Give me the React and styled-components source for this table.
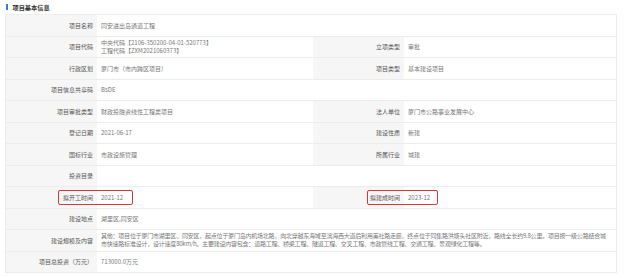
import React from "react";
import styled, { createGlobalStyle } from "styled-components";

const GlobalStyle = createGlobalStyle`
  html, body {
    margin: 0;
    padding: 0;
    background: #fff;
  }
  body {
    font-family: "Noto Sans CJK SC", "Noto Sans", sans-serif;
    color: #333;
  }
`;

const rows = [
  { full: true, label: "项目名称", value: "同安进出岛通道工程" },
  {
    label: "项目代码",
    value: ["中央代码【2106-350200-04-01-520773】", "工程代码【ZXM2021060373】"],
    label2: "立项类型",
    value2: "审批",
  },
  { label: "行政区划", value: "厦门市（市内跨区项目）", label2: "项目类型", value2: "基本建设项目" },
  { full: true, label: "项目信息共享码", value: "BsDE" },
  { label: "项目审批类型", value: "财政投融资线性工程类项目", label2: "法人单位", value2: "厦门市公路事业发展中心" },
  { label: "登记日期", value: "2021-06-17", label2: "建设性质", value2: "新建" },
  { label: "国标行业", value: "市政设施管理", label2: "所属行业", value2: "城建" },
  { full: true, label: "投资目录", value: "" },
  { label: "拟开工时间", value: "2021-12", label2: "拟建成时间", value2: "2023-12", marked: true },
  { full: true, label: "建设地点", value: "湖里区,同安区" },
  {
    full: true,
    tight: true,
    label: "建设规模及内容",
    value: [
      "其他：项目位于厦门市湖里区、同安区，起点位于厦门岛内机场北路，向北穿越东海域至滨海西大道后利用美社路走廊，终点位于同集路洪塘头社区附近，路线全长约9.8公里。项目按一级公路结合城",
      "市快速路标准设计，设计速度80km/h。主要建设内容包含：道路工程、桥梁工程、隧道工程、交叉工程、市政管线工程、交通工程、景观绿化工程等。",
    ],
  },
  { full: true, label: "项目总投资（万元）", value: "713000.0万元" },
];

const App = () => {
  return (
    <>
      <GlobalStyle />
      <Panel>
        <Header>项目基本信息</Header>
        <Table>
          {rows.map((r, i) => (
            <Row key={i} $full={r.full}>
              <Label>{r.label}</Label>
              <Value $tight={r.tight}>
                {Array.isArray(r.value)
                  ? r.value.map((line, j) => <Line key={j}>{line}</Line>)
                  : r.value}
              </Value>
              {!r.full && <Label>{r.label2}</Label>}
              {!r.full && <Value>{r.value2}</Value>}
              {r.marked && (
                <>
                  <Mark $left={52} $width={75} />
                  <Mark $left={361} $width={71} />
                </>
              )}
            </Row>
          ))}
        </Table>
      </Panel>
    </>
  );
};

const Panel = styled.div`
  padding: 0 7px 0 5px;
`;

const Header = styled.div`
  display: flex;
  align-items: center;
  gap: 5px;
  height: 14px;
  padding-left: 1px;
  font-size: 6.2px;
  font-weight: 700;
  color: #333;

  &::before {
    content: "";
    width: 1.5px;
    height: 6px;
    background: #3a7bd5;
  }
`;

const Table = styled.div`
  width: 612px;
  border: 1px solid #ececec;
  border-bottom: none;
  box-sizing: border-box;
`;

const Row = styled.div`
  position: relative;
  display: grid;
  grid-template-columns: ${(p) => (p.$full ? "91px 1fr" : "91px 216px 91px 1fr")};
  height: 21.5px;
  border-bottom: 1px solid #ececec;
  box-sizing: border-box;
  font-size: 6px;
`;

const Label = styled.div`
  display: flex;
  align-items: center;
  justify-content: flex-end;
  padding-right: 4px;
  background: #f6f6f6;
  color: #555;
  white-space: nowrap;
`;

const Value = styled.div`
  display: flex;
  flex-direction: column;
  justify-content: center;
  padding-left: 4px;
  color: #777;
  white-space: nowrap;
  overflow: hidden;
  letter-spacing: ${(p) => (p.$tight ? "-0.22px" : "normal")};
`;

const Line = styled.div`
  line-height: 8px;
`;

const Mark = styled.div`
  position: absolute;
  top: 2.5px;
  left: ${(p) => p.$left}px;
  width: ${(p) => p.$width}px;
  height: 15px;
  border: 1px solid #d23a3a;
  border-radius: 2px;
  box-sizing: border-box;
  pointer-events: none;
`;

export default App;
